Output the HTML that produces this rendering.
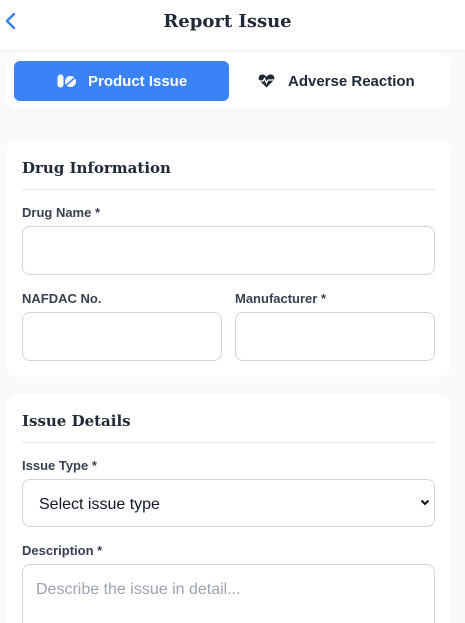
<!DOCTYPE html>
<html><head><style>
*{box-sizing:border-box;margin:0;padding:0}
html,body{width:465px;height:623px;overflow:hidden}
body{background:#f8f9fb;font-family:"Liberation Sans",sans-serif;position:relative}
.abs{position:absolute}
.hdr{left:0;top:0;width:465px;height:50px;background:#fff;box-shadow:0 1px 2px rgba(0,0,0,.05)}
.title{font-family:"DejaVu Serif","Liberation Serif",serif;font-weight:bold;color:#1f2937}
.card{background:#fff;border-radius:12px;left:6px;width:445px}
.lbl{font-size:13px;font-weight:bold;color:#374151}
.inp{border:1px solid #d1d5db;border-radius:8px;background:#fff}
.div{height:1px;background:#e5e7eb;left:22px;width:413px}
</style></head><body>
<div class="abs hdr"></div>
<svg class="abs" style="left:4px;top:12px" width="14" height="18" viewBox="0 0 14 18"><path d="M10 2 L3 9 L10 16" fill="none" stroke="#3b82f6" stroke-width="2.4" stroke-linecap="round" stroke-linejoin="round"/></svg>
<div class="abs title" style="left:0;width:455px;top:9px;text-align:center;font-size:18px;line-height:26px">Report Issue</div>
<div class="abs card" style="top:53px;height:55px"></div>
<div class="abs" style="left:14px;top:61px;width:215px;height:40px;background:#3b82f6;border-radius:6px"></div>
<svg class="abs" style="left:57px;top:74px" width="20" height="14" viewBox="0 0 20 14"><rect x="0.5" y="0.5" width="6" height="13" rx="3" fill="#fff"/><circle cx="13.5" cy="7.5" r="5.5" fill="#fff"/><path d="M9.5 11 L17.5 4" stroke="#3b82f6" stroke-width="1.5"/></svg>
<div class="abs" style="left:88px;top:73px;font-size:15px;font-weight:bold;color:#fff">Product Issue</div>
<svg class="abs" style="left:258px;top:74px" width="17" height="14" viewBox="0 0 17 14"><path d="M8.5 13.5 L1.5 6.5 C-0.5 4 1 0.5 4.5 0.5 C6.5 0.5 7.8 1.8 8.5 3 C9.2 1.8 10.5 0.5 12.5 0.5 C16 0.5 17.5 4 15.5 6.5 Z" fill="#1f2937"/><path d="M1 7 H5 L6.5 4.5 L8.5 9 L10 6 H16" fill="none" stroke="#fff" stroke-width="1.3"/></svg>
<div class="abs" style="left:288px;top:73px;font-size:15px;font-weight:bold;color:#1f2937">Adverse Reaction</div>

<div class="abs card" style="top:141px;height:236px"></div>
<div class="abs title" style="left:22px;top:159px;font-size:15px">Drug Information</div>
<div class="abs div" style="top:189px"></div>
<div class="abs lbl" style="left:22px;top:205px">Drug Name *</div>
<div class="abs inp" style="left:22px;top:226px;width:413px;height:49px"></div>
<div class="abs lbl" style="left:22px;top:291px">NAFDAC No.</div>
<div class="abs lbl" style="left:235px;top:291px">Manufacturer *</div>
<div class="abs inp" style="left:22px;top:312px;width:200px;height:49px"></div>
<div class="abs inp" style="left:235px;top:312px;width:200px;height:49px"></div>

<div class="abs card" style="top:394px;height:240px"></div>
<div class="abs title" style="left:22px;top:412px;font-size:15px">Issue Details</div>
<div class="abs div" style="top:442px"></div>
<div class="abs lbl" style="left:22px;top:458px">Issue Type *</div>
<div class="abs inp" style="left:22px;top:479px;width:413px;height:48px"></div>
<div class="abs" style="left:39px;top:496px;font-size:16px;color:#111827">Select issue type</div>
<svg class="abs" style="left:420px;top:499px" width="10" height="7" viewBox="0 0 10 7"><path d="M1.5 1.5 L5 5 L8.5 1.5" fill="none" stroke="#111" stroke-width="2"/></svg>
<div class="abs lbl" style="left:22px;top:543px">Description *</div>
<div class="abs inp" style="left:22px;top:564px;width:413px;height:70px"></div>
<div class="abs" style="left:36px;top:581px;font-size:16px;color:#9ca3af">Describe the issue in detail...</div>
</body></html>
